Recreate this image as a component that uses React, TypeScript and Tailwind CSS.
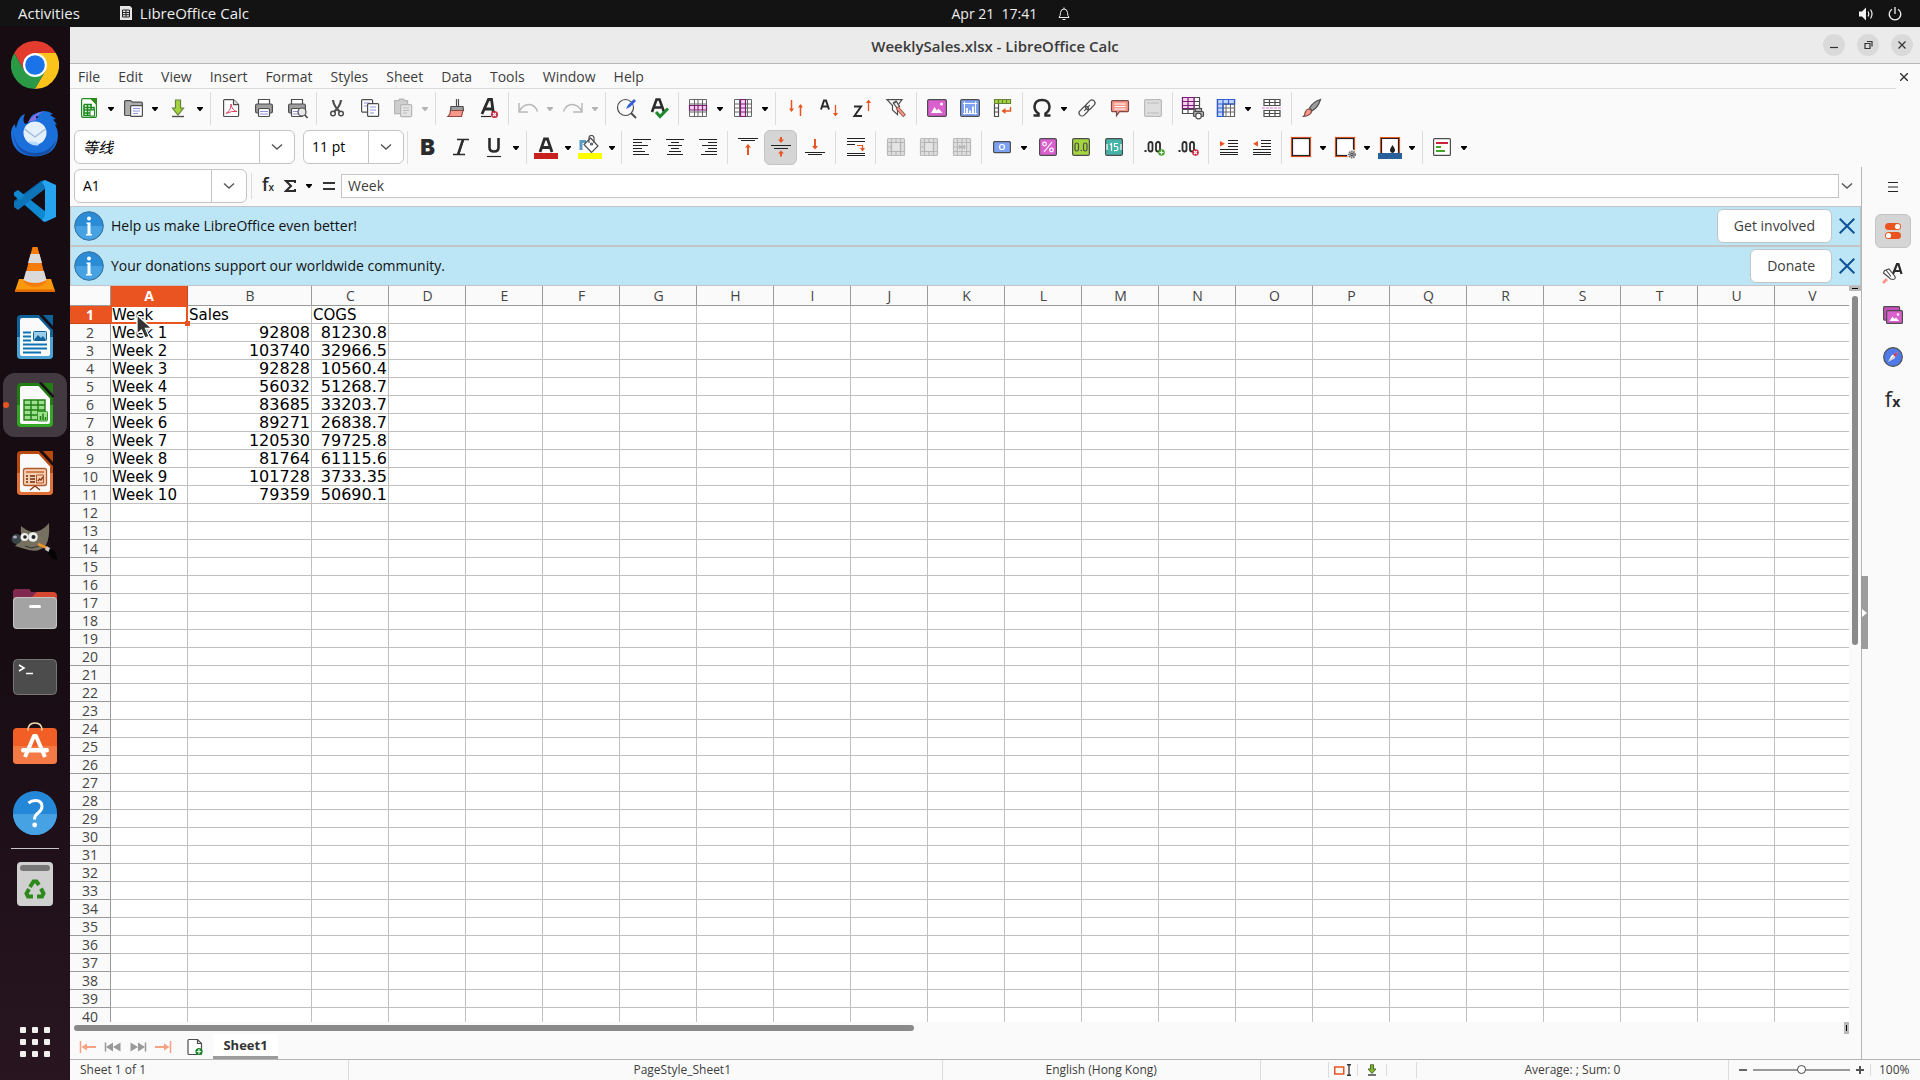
import React from "react";

const columns = "ABCDEFGHIJKLMNOPQRSTUV".split("");

const data: string[][] = [
  ["Week", "Sales", "COGS"],
  ["Week 1", "92808", "81230.8"],
  ["Week 2", "103740", "32966.5"],
  ["Week 3", "92828", "10560.4"],
  ["Week 4", "56032", "51268.7"],
  ["Week 5", "83685", "33203.7"],
  ["Week 6", "89271", "26838.7"],
  ["Week 7", "120530", "79725.8"],
  ["Week 8", "81764", "61115.6"],
  ["Week 9", "101728", "3733.35"],
  ["Week 10", "79359", "50690.1"],
];

const menus = ["File", "Edit", "View", "Insert", "Format", "Styles", "Sheet", "Data", "Tools", "Window", "Help"];

const DARK = "#4d4d4d";
const ORANGE = "#e95420";

type SvgProps = { children: React.ReactNode; className?: string };

const Icon = ({ children, className = "" }: SvgProps) => (
  <svg viewBox="0 0 24 24" className={`w-6 h-6 shrink-0 ${className}`} fill="none" stroke={DARK} strokeWidth="1.2" aria-hidden="true">
    {children}
  </svg>
);

const AppIcon = ({ children }: SvgProps) => (
  <svg viewBox="0 0 48 48" className="w-12 h-12" fill="none" aria-hidden="true">
    {children}
  </svg>
);

const Chevron = () => (
  <svg viewBox="0 0 12 8" className="w-3 h-2" fill="none" stroke="#555" strokeWidth="1.4" aria-hidden="true">
    <path d="M1 1.5 6 6l5-4.5" />
  </svg>
);

const Arrow = ({ muted }: { muted?: boolean }) => (
  <svg viewBox="0 0 6 4" className={muted ? "w-1.5 h-1 text-[#b4b4b4]" : "w-1.5 h-1 text-black"} aria-hidden="true">
    <path d="M0 0h6v1L3.500 4h-1L0 1z" fill="currentColor" />
  </svg>
);

const Tool = ({ label, children, wide }: { label: string; children: React.ReactNode; wide?: boolean }) => (
  <button aria-label={label} className={`${wide ? "w-[35px]" : "w-[33px]"} h-9 flex items-center justify-center shrink-0`}>
    {children}
  </button>
);

// icon with its drop-down arrow; the last one in a group is a little wider
const Drop = ({ label, children, last, muted }: { label: string; children: React.ReactNode; last?: boolean; muted?: boolean }) => (
  <button aria-label={label} className={`${last ? "w-[46px]" : "w-11"} h-9 flex items-center shrink-0`}>
    <span className="w-[33px] flex justify-center">{children}</span>
    <span className="w-3 pt-0.5 flex justify-center">
      <Arrow muted={muted} />
    </span>
  </button>
);

const Sep = () => <span className="mx-[3px] w-px h-[33px] bg-[#dcdcdc] shrink-0" />;

const Printer = () => (
  <>
    <path d="M6.500 8V3.500h11V8" fill="#fff" />
    <rect x="3.600" y="8" width="16.800" height="9" rx="1.500" fill="#9e9e9e" />
    <rect x="6.500" y="12.500" width="11" height="8" rx="1" fill="#fff" />
    <path d="M8 15.500h8M8 18h8" stroke="#8d92e8" />
  </>
);

const GridLines = ({ stroke = "#666" }: { stroke?: string }) => (
  <g stroke={stroke} strokeWidth="1">
    <path d="M3.500 3.500h17v17h-17zM8.500 3.500v17M12 3.500v17M16.500 3.500v17M3.500 8h17M3.500 12h17M3.500 16h17" />
  </g>
);

const MergeIcon = ({ inner }: { inner: string }) => (
  <Icon>
    <rect x="3.500" y="3.500" width="17" height="17" rx="1" fill="#dedede" stroke="#b9b9b9" />
    <path d="M3.500 7.500h17M3.500 16.500h17M7.500 3.500v17M16.500 3.500v17M12 3.500v4M12 16.500v4M3.500 12h4" stroke="#b9b9b9" />
    <rect x="8" y="8" width="8" height="8" fill="#e4e4e4" stroke="none" />
    <path d={inner} stroke="#b4b4b4" />
  </Icon>
);

const BigLetter = ({ children, className = "" }: SvgProps) => (
  <span className={`font-[Inter,Roboto,sans-serif] font-black leading-6 text-[#2b2b2b] ${className}`}>{children}</span>
);

const StandardToolbar = () => (
  <div className="flex items-center h-[38px] pl-[3px]">
    <Drop label="New">
      <Icon>
        <path d="M6 2.600h8.500L19.400 8v12a1.400 1.400 0 0 1-1.400 1.400H6A1.400 1.400 0 0 1 4.600 20V4A1.400 1.400 0 0 1 6 2.600z" fill="#fff" stroke="#1c8a1c" />
        <path d="M12.500 2H20v7.500z" fill="#2c8a1a" stroke="none" />
        <path d="M7 8.500h8M7 11.500h10v8H7zM7 14h10M7 17h10M10.500 8.500v11M14 8.500v11M7 8.500v3" stroke="#1c8a1c" strokeWidth="1.600" />
        <path d="M13 14h4.500v6H13z" fill="#fff" stroke="#1c8a1c" strokeWidth="1" />
      </Icon>
    </Drop>
    <Drop label="Open">
      <Icon>
        <path d="M3.600 18.500V5.600Q3.600 4.600 4.600 4.600h5l2 1.600h8.500q1.300 0 1.300 1.300v11q0 1-1 1H4.600q-1 0-1-1z" fill="#adadad" />
        <rect x="9.600" y="9.600" width="11.800" height="10.800" rx="1" fill="#fff" />
        <path d="M12 12.500h7M12 15h7M12 17.500h5" stroke="#8d92e8" />
      </Icon>
    </Drop>
    <Drop label="Save" last>
      <Icon>
        <path d="M9.500 4h5v8h3L12 19l-5.500-7h3z" fill="#a5d53e" stroke="#66823a" />
        <path d="M6 20.500h12" stroke={DARK} strokeWidth="1.400" />
      </Icon>
    </Drop>
    <Sep />
    <Tool label="Export as PDF">
      <Icon>
        <path d="M5.500 3.600h9L19.600 8.500v11q0 1-1 1h-13q-1 0-1-1v-15q0-1 1-1z" fill="#fff" />
        <path d="M14.500 3.600v5h5" fill="#ddd" />
        <path d="M7 17.500q5-3 5-9.500 1 6.500 6 7.500-5-1-11 2z" stroke="#d94560" strokeWidth="1" />
      </Icon>
    </Tool>
    <Tool label="Print">
      <Icon><Printer /></Icon>
    </Tool>
    <Tool label="Print Preview">
      <Icon>
        <Printer />
        <circle cx="17" cy="16" r="4" fill="#e8e8e8" />
        <path d="m20 19 2.500 3" strokeWidth="1.800" />
      </Icon>
    </Tool>
    <Sep />
    <Tool label="Cut">
      <Icon>
        <path d="M8 4q.500 6 7 12M16 4q-.500 6-7 12" strokeWidth="2.200" />
        <circle cx="8" cy="17.500" r="2.300" strokeWidth="1.500" />
        <circle cx="16" cy="17.500" r="2.300" strokeWidth="1.500" />
      </Icon>
    </Tool>
    <Tool label="Copy">
      <Icon>
        <rect x="3.600" y="3.600" width="11" height="12.500" rx="1" fill="#fff" />
        <path d="M6 7h6M6 10h4" stroke="#8d92e8" />
        <rect x="9.600" y="7.600" width="11" height="12.800" rx="1" fill="#fff" />
        <path d="M12 11h6M12 14h6M12 17h4" stroke="#8d92e8" />
      </Icon>
    </Tool>
    <Drop label="Paste" last muted>
      <Icon>
        <path d="M3.600 4.600h4l1-1.500h4l1 1.500h3v13h-13z" fill="#cfcfcf" stroke="#b5b5b5" />
        <rect x="9.600" y="8.600" width="11" height="12" rx="1" fill="#e4e4e4" stroke="#b5b5b5" />
        <path d="M12 12h6M12 14.500h6M12 17h4" stroke="#bbb" />
      </Icon>
    </Drop>
    <Sep />
    <Tool label="Clone Formatting">
      <Icon>
        <path d="M12.500 3v7M14.500 3v7" />
        <path d="M6.500 14.500 7 10.500h12l.500 4z" fill="#9e9e9e" />
        <path d="M6.500 14.500h12.500l-1.500 6H4q2.500-2.500 2.500-6z" fill="#f7988a" stroke="#8f4a42" />
      </Icon>
    </Tool>
    <Tool label="Clear Direct Formatting">
      <Icon>
        <path d="m5 18 6.500-14.500h3L16.500 18M8 13h7" stroke="#2b2b2b" strokeWidth="2.800" />
        <path d="M4 20.500h10" stroke="#2b2b2b" />
        <circle cx="17.500" cy="18.500" r="3.500" fill="#c9243c" stroke="none" />
        <path d="m16 17 3 3m0-3-3 3" stroke="#fff" />
      </Icon>
    </Tool>
    <Sep />
    <Drop label="Undo" muted>
      <Icon>
        <path d="M3 7v9h9M3.500 15Q7 8.500 13 8.500q6 0 8.500 7" stroke="#b9b9b9" strokeWidth="1.500" />
      </Icon>
    </Drop>
    <Drop label="Redo" last muted>
      <Icon>
        <path d="M21 7v9h-9M20.500 15Q17 8.500 11 8.500q-6 0-8.500 7" stroke="#b9b9b9" strokeWidth="1.500" />
      </Icon>
    </Drop>
    <Sep />
    <Tool label="Find and Replace">
      <Icon>
        <circle cx="11.500" cy="11.500" r="8" />
        <path d="m17 17 5 5" strokeWidth="2" />
        <path d="m12 13 2-4 6-6 2 2-6 6z" fill="#2f5fd8" stroke="none" />
      </Icon>
    </Tool>
    <Tool label="Spelling">
      <Icon>
        <path d="m5 16 4.500-12.500h3L17 16M7 11.500h7" stroke="#2b2b2b" strokeWidth="2.600" />
        <path d="m9 16 4 4.500 8-8" stroke="#1a8a2a" strokeWidth="3" />
      </Icon>
    </Tool>
    <Sep />
    <Drop label="Row">
      <Icon>
        <GridLines />
        <path d="M3.500 9.500h17v4.500h-17zM8.500 9.500V14M12 9.500V14M16.500 9.500V14" fill="#f3d3ef" stroke="#7d1d74" />
      </Icon>
    </Drop>
    <Drop label="Column" last>
      <Icon>
        <GridLines />
        <path d="M9.500 3.500h5v17h-5zM9.500 8h5M9.500 12h5M9.500 16h5" fill="#f3d3ef" stroke="#7d1d74" />
      </Icon>
    </Drop>
    <Sep />
    <Tool label="Sort">
      <Icon>
        <path d="M7.500 4v11M16.500 9v11" stroke={ORANGE} strokeWidth="1.500" />
        <path d="M5 12.500h5l-2.500 3.500zM14 11.500h5L16.500 8z" fill={ORANGE} stroke="none" />
      </Icon>
    </Tool>
    <Tool label="Sort Ascending">
      <Icon>
        <path d="m4 13.500 3-9h2l3 9M5 10.500h6" stroke="#2b2b2b" strokeWidth="2" />
        <path d="M18.500 9v10" stroke={ORANGE} strokeWidth="1.300" />
        <path d="M16 17h5l-2.500 3.500z" fill={ORANGE} stroke="none" />
      </Icon>
    </Tool>
    <Tool label="Sort Descending">
      <Icon>
        <path d="M4 10.500h7L4.500 20H12" stroke="#2b2b2b" strokeWidth="2" />
        <path d="M18.500 5v10" stroke={ORANGE} strokeWidth="1.300" />
        <path d="M16 7h5l-2.500-3.500z" fill={ORANGE} stroke="none" />
      </Icon>
    </Tool>
    <Tool label="AutoFilter" wide>
      <Icon>
        <path d="M3 3.600h15l-4.500 6v9L8.500 14V9.600z" fill="#fff" />
        <path d="m9 7 3-2 3 5" fill="#fff" />
        <path d="m9.500 7.500 3-2 3 5-2 2z" fill="#eee" />
        <path d="m13 11.500 7.500 8.500" stroke="#8f4a42" strokeWidth="3.600" />
        <path d="m13.500 12 6.500 7.500" stroke="#f7988a" strokeWidth="2" />
      </Icon>
    </Tool>
    <Sep />
    <Tool label="Insert Image">
      <Icon>
        <rect x="2.600" y="3.600" width="18.800" height="16.800" rx="1.500" fill="#da5fcf" />
        <path d="m6 17 3.500-6 2.500 3.500 1.500-2 4 4.500z" fill="#fff" stroke="none" />
        <circle cx="16.500" cy="8" r="1.500" fill="#fff" stroke="none" />
      </Icon>
    </Tool>
    <Tool label="Insert Chart">
      <Icon>
        <rect x="2.600" y="3.600" width="18.800" height="16.800" rx="1.500" fill="#7da2f5" />
        <path d="M6.500 5.500v13M5 7.500h14M17.500 5.500v13M5 17.500h14" stroke="#fff" strokeWidth="1" />
        <path d="M9 12v5M12 14.500V17M15 10.500V17" stroke="#fff" strokeWidth="1.800" />
      </Icon>
    </Tool>
    <Tool label="Pivot Table">
      <Icon>
        <path d="M3.500 8v12.500h4V8M3.500 12h4M3.500 16h4" fill="#fff" />
        <path d="M3.500 3.500h16v4h-16zM7.500 3.500v4M11.500 3.500v4M15.500 3.500v4" fill="#a5d53e" stroke="#66823a" />
        <path d="M19.500 11v4h-7" stroke={ORANGE} strokeWidth="1.400" />
        <path d="M14.500 12v6L10.500 15z" fill={ORANGE} stroke="none" />
      </Icon>
    </Tool>
    <Sep />
    <Drop label="Special Character">
      <Icon>
        <path d="M3.500 19.500h5v-2Q4.500 15 4.500 10.500 5 4 12 4q7 0 7.500 6.500 0 4.500-4 7v2h5" stroke="#2b2b2b" strokeWidth="2.500" />
      </Icon>
    </Drop>
    <Tool label="Hyperlink">
      <Icon>
        <g transform="rotate(-45 12 12)">
          <rect x="2" y="9" width="11" height="6" rx="3" />
          <rect x="11" y="9" width="11" height="6" rx="3" />
          <path d="M8 12h8" />
        </g>
      </Icon>
    </Tool>
    <Tool label="Comment">
      <Icon>
        <path d="M4.500 4.600h15q1 0 1 1v9q0 1-1 1h-8l-3 4v-4h-4q-1 0-1-1v-9q0-1 1-1z" fill="#f7988a" stroke="#7e4a45" />
        <path d="M6.500 8h11M6.500 10.500h11M6.500 13h11" stroke="#fff" strokeWidth="1" />
      </Icon>
    </Tool>
    <Tool label="Headers and Footers">
      <Icon>
        <rect x="3.600" y="3.600" width="16.800" height="16.800" rx="1.500" fill="#dedede" stroke="#b9b9b9" />
        <path d="M6 7h12M6 17h12" stroke="#b9b9b9" />
      </Icon>
    </Tool>
    <Sep />
    <Tool label="Define Print Area">
      <Icon>
        <path d="M1.500 1.500h17v16h-17zM1.500 5.500h17M1.500 9.500h17M1.500 13.500h17M7 1.500v16M13 1.500v16" fill="#fff" />
        <path d="M1.500 1.500H13v11H1.500zM1.500 5.500H13M1.500 9.500H13M7 1.500v11" fill="#f3d3ef" stroke="#7d1d74" />
        <rect x="14.500" y="12.500" width="6" height="4" fill="#bbb" />
        <rect x="12.500" y="15.500" width="10" height="5" rx="1" fill="#adadad" />
        <circle cx="17.500" cy="20" r="2.800" fill="#fff" />
      </Icon>
    </Tool>
    <Drop label="Freeze Rows and Columns" last>
      <Icon>
        <path d="M3.500 3.500h17v17h-17z" fill="#fff" />
        <GridLines />
        <path d="M3.500 3.500h17V8H9v12.500H3.500z" fill="#c3d6fb" />
        <path d="M3.500 3.500h17V8h-17zM3.500 8v12.500H9V3.500M3.500 12H9M3.500 16H9M14.500 3.500V8" stroke="#2f5fd8" />
      </Icon>
    </Drop>
    <Tool label="Split Window">
      <Icon>
        <path d="M4 3.500h16v6H4zM4 6.500h16M9.500 3.500v6M15 3.500v6M4 14.500h16v6H4zM4 17.500h16M9.500 14.500v6M15 14.500v6" fill="#fff" />
        <path d="M2 12h20" stroke="#e27bd9" strokeDasharray="3 1" />
      </Icon>
    </Tool>
    <Sep />
    <Tool label="Show Draw Functions">
      <Icon>
        <path d="M20.500 3.500q-7 2-11 8.500l2.500 3q6-3.500 8.500-11.500z" fill="#9e9e9e" />
        <path d="M8.500 13q3 0 3 3-2 4-8 4.500 1.500-1.500 1.500-3.500 1-3.500 3.500-4z" fill="#f7988a" stroke="#7e4a45" />
      </Icon>
    </Tool>
  </div>
);

const Lines = ({ rows }: { rows: [number, number][] }) => (
  <Icon>
    {rows.map(([x1, x2], i) => (
      <path key={i} d={`M${x1} ${4.5 + i * 3}H${x2}`} stroke="#222" strokeWidth="1" />
    ))}
  </Icon>
);

const Combo = ({ label, value, className, inputClass }: { label: string; value: string; className: string; inputClass?: string }) => (
  <div className={`flex h-[34px] border border-[#c4c4c4] rounded-md bg-white overflow-hidden shrink-0 ${className}`}>
    <input aria-label={label} defaultValue={value} className={`flex-1 min-w-0 px-2 text-black outline-none ${inputClass ?? "text-sm"}`} />
    <button aria-label={`${label} list`} className="w-[35px] border-l border-[#c4c4c4] flex items-center justify-center">
      <Chevron />
    </button>
  </div>
);

const FormattingToolbar = () => (
  <div className="flex items-center h-10 pl-1">
    <Combo label="Font Name" value="等线" className="w-[221px]" inputClass="text-[15px] italic font-['Noto_Sans_CJK_SC',sans-serif]" />
    <Combo label="Font Size" value="11 pt" className="w-[101px] ml-2" />
    <Sep />
    <Tool label="Bold"><BigLetter className="text-[22px]">B</BigLetter></Tool>
    <Tool label="Italic">
      <Icon><path d="M8 4.500h12M4 19.500h12M14.500 4.500l-5 15" stroke="#2b2b2b" strokeWidth="1.600" /><path d="m14 4.500-5 15" stroke="#2b2b2b" strokeWidth="2.400" /></Icon>
    </Tool>
    <Drop label="Underline" last>
      <Icon><path d="M7.500 3v9.500q0 4 4.500 4t4.500-4V3" stroke="#2b2b2b" strokeWidth="2.600" /><path d="M5 21.500h14" stroke="#2b2b2b" /></Icon>
    </Drop>
    <Sep />
    <Drop label="Font Color">
      <Icon>
        <path d="m6 17 4.500-13h3L18 17M8 12.500h8" stroke="#2b2b2b" strokeWidth="2.800" />
        <path d="M0 18h24v6H0z" fill="#c9211e" stroke="none" />
      </Icon>
    </Drop>
    <Drop label="Background Color">
      <Icon>
        <path d="M3 15V6.500h5" stroke="#5b9cc4" strokeWidth="3" />
        <path d="m12.500 3 7.500 8-6.500 6.500-7.500-8z" fill="#fff" />
        <path d="M11 8V3q0-2.500 2.500-2.500T16 3v5" />
        <circle cx="13.500" cy="9" r="1" />
        <path d="M0 18h24v6H0z" fill="#ffff00" stroke="none" />
      </Icon>
    </Drop>
    <Sep />
    <Tool label="Align Left"><Lines rows={[[3, 21], [3, 12], [3, 18], [3, 12], [3, 15], [3, 19]]} /></Tool>
    <Tool label="Center Horizontally"><Lines rows={[[3, 21], [8, 16], [5, 19], [8, 16], [6, 18], [4, 20]]} /></Tool>
    <Tool label="Align Right"><Lines rows={[[3, 21], [12, 21], [6, 21], [12, 21], [9, 21], [5, 21]]} /></Tool>
    <Sep />
    <Tool label="Align Top">
      <Icon>
        <path d="M2 3.500h20M5 5.500h14" stroke="#222" strokeWidth="1" />
        <path d="M12 10v10" stroke={ORANGE} strokeWidth="2" />
        <path d="M9 12.500h6L12 9z" fill={ORANGE} stroke="none" />
      </Icon>
    </Tool>
    <button aria-label="Center Vertically" aria-pressed="true" className="w-[33px] h-[35px] flex items-center justify-center rounded-md bg-[#d5d5d5] border border-[#c4c4c4] shrink-0">
      <Icon>
        <path d="M2 10.500h20M5 13.500h14" stroke="#222" strokeWidth="1" />
        <path d="M12 2v4M12 17.500v4" stroke={ORANGE} strokeWidth="2" />
        <path d="M9 4.500h6L12 8zM9 18.500h6L12 15.500z" fill={ORANGE} stroke="none" />
      </Icon>
    </button>
    <Tool label="Align Bottom" wide>
      <Icon>
        <path d="M2 17.500h20M5 19.500h14" stroke="#222" strokeWidth="1" />
        <path d="M12 4v9" stroke={ORANGE} strokeWidth="2" />
        <path d="M9 11h6l-3 3.500z" fill={ORANGE} stroke="none" />
      </Icon>
    </Tool>
    <Sep />
    <Tool label="Wrap Text">
      <Icon>
        <path d="M3 3.500h18M3 6.500h18M3 9.500h8M3 18.500h18M3 20.500h18" stroke="#222" strokeWidth="1" />
        <path d="M13 10.500h5.500v3" stroke={ORANGE} />
        <path d="M16 13h5l-2.500 3.500z" fill={ORANGE} stroke="none" />
      </Icon>
    </Tool>
    <Sep />
    <Tool label="Merge and Center Cells"><MergeIcon inner="M7.500 7.500h9v9h-9z" /></Tool>
    <Tool label="Merge Cells"><MergeIcon inner="M7.500 7.500h9v9h-9z" /></Tool>
    <Tool label="Unmerge Cells"><MergeIcon inner="M7.500 12h3m6 0h-3M12 7.500v9M9 10l2 2-2 2m6-4-2 2 2 2" /></Tool>
    <Sep />
    <Drop label="Format as Currency" last>
      <Icon>
        <rect x="3.600" y="6.600" width="16.800" height="11" rx="1" fill="#7da2f5" />
        <circle cx="12" cy="12" r="2.500" stroke="#fff" />
      </Icon>
    </Drop>
    <Tool label="Format as Percent">
      <Icon>
        <rect x="3.600" y="3.600" width="16.800" height="16.800" rx="1.500" fill="#da5fcf" />
        <path d="m8 17 8-10" stroke="#fff" />
        <circle cx="8.500" cy="9" r="1.800" stroke="#fff" />
        <circle cx="15.500" cy="15" r="1.800" stroke="#fff" />
      </Icon>
    </Tool>
    <Tool label="Format as Number">
      <Icon>
        <rect x="3.600" y="3.600" width="16.800" height="16.800" rx="1.500" fill="#a5d53e" />
        <rect x="6" y="8" width="3.500" height="8" rx="1.700" />
        <rect x="14.500" y="8" width="3.500" height="8" rx="1.700" />
        <path d="M11.500 15.500h1.500" />
      </Icon>
    </Tool>
    <Tool label="Format as Date">
      <Icon>
        <rect x="3.600" y="3.600" width="16.800" height="16.800" rx="1.500" fill="#45b3a8" />
        <path d="M5 9v6M19 9v6M8 9.500l1.500-1V16M16 8.500h-3.500v3q3.500-.500 3.500 2t-4 2" stroke="#fff" />
      </Icon>
    </Tool>
    <Sep />
    <Tool label="Add Decimal Place">
      <Icon>
        <path d="M2.500 16h2" stroke="#2b2b2b" strokeWidth="2" />
        <rect x="6.500" y="7" width="4" height="9.500" rx="2" stroke="#2b2b2b" strokeWidth="1.800" />
        <rect x="14" y="7" width="4" height="9.500" rx="2" stroke="#2b2b2b" strokeWidth="1.800" />
        <circle cx="19.500" cy="17.500" r="3.300" fill="#43a528" stroke="none" />
        <path d="M17.500 17.500h4M19.500 15.500v4" stroke="#fff" />
      </Icon>
    </Tool>
    <Tool label="Delete Decimal Place" wide>
      <Icon>
        <path d="M2.500 16h2" stroke="#2b2b2b" strokeWidth="2" />
        <rect x="6.500" y="7" width="4" height="9.500" rx="2" stroke="#2b2b2b" strokeWidth="1.800" />
        <rect x="14" y="7" width="4" height="9.500" rx="2" stroke="#2b2b2b" strokeWidth="1.800" />
        <circle cx="19.500" cy="17.500" r="3.300" fill="#c9243c" stroke="none" />
        <path d="m18 16 3 3m0-3-3 3" stroke="#fff" />
      </Icon>
    </Tool>
    <Sep />
    <Tool label="Increase Indent">
      <Icon>
        <path d="M11 5.500h10M11 8.500h10M11 11.500h10M3 14.500h18M3 17.500h18M3 19.500h18" stroke="#222" strokeWidth="1" />
        <path d="M3 6v5.500L8 8.700z" fill={ORANGE} stroke="none" />
      </Icon>
    </Tool>
    <Tool label="Decrease Indent">
      <Icon>
        <path d="M11 5.500h10M11 8.500h10M11 11.500h10M3 14.500h18M3 17.500h18M3 19.500h18" stroke="#222" strokeWidth="1" />
        <path d="M8 6v5.500L3 8.700z" fill={ORANGE} stroke="none" />
      </Icon>
    </Tool>
    <Sep />
    <Drop label="Borders">
      <Icon>
        <rect x="2.500" y="2.500" width="19" height="19" stroke={ORANGE} />
        <rect x="3.500" y="3.500" width="17" height="17" fill="#fff" stroke="#222" />
      </Icon>
    </Drop>
    <Drop label="Border Style">
      <Icon>
        <rect x="2.500" y="2.500" width="19" height="19" stroke={ORANGE} />
        <rect x="3.500" y="3.500" width="17" height="17" fill="#fff" stroke="#222" />
        <circle cx="19" cy="19.500" r="5" fill="#fafafa" stroke="none" />
        <circle cx="19" cy="19.500" r="3.200" fill="#bbb" stroke="#777" strokeWidth="1.800" strokeDasharray="1.500 .800" />
        <circle cx="19" cy="19.500" r="1.200" fill="#fff" />
      </Icon>
    </Drop>
    <Drop label="Border Color" last>
      <Icon>
        <path d="M2.500 18V2.500h19V18" stroke={ORANGE} />
        <path d="M3.500 18V3.500h17V18" fill="#fff" stroke="#222" />
        <path d="M14.500 10q3 4 2.500 6-1 2-2.500 2T12 16q-.500-2 2.500-6z" fill="#222" stroke="none" />
        <path d="M0 18h24v6H0z" fill="#2a6099" stroke="none" />
      </Icon>
    </Drop>
    <Sep />
    <Drop label="Conditional Formatting">
      <Icon>
        <rect x="3.600" y="3.600" width="16.800" height="16.800" rx="1" fill="#fff" />
        <path d="M6 8h12" stroke="#c9243c" strokeWidth="2" />
        <path d="M6 12h5M6 16h9" stroke="#43a528" strokeWidth="2" />
      </Icon>
    </Drop>
  </div>
);

const FormulaBar = () => (
  <div className="flex items-center h-[39px] pl-1 pr-1.5 pb-0.5 shrink-0">
    <Combo label="Name Box" value="A1" className="w-[173px]" />
    <span className="mx-1 w-px h-[26px] bg-[#dcdcdc]" />
    <button aria-label="Function Wizard" className="w-6 text-center leading-6 text-[#2b2b2b] text-lg font-semibold">
      f<span className="text-[10px]">x</span>
    </button>
    <button aria-label="Select Function" className="w-[37px] pl-1 flex items-center gap-2.5">
      <svg viewBox="0 0 12 14" className="w-3 h-3.5 shrink-0" fill="none" stroke="#2b2b2b" strokeWidth="2" aria-hidden="true">
        <path d="M11 4V2H2l5 5-5 5h9v-2" />
      </svg>
      <Arrow />
    </button>
    <button aria-label="Formula" className="w-6 flex flex-col items-center gap-1">
      <span className="w-3 h-0.5 bg-[#333]" />
      <span className="w-3 h-0.5 bg-[#333]" />
    </button>
    <input aria-label="Input line" defaultValue="Week" className="flex-1 min-w-0 h-6 border border-[#c4c4c4] bg-white px-1.5 text-sm text-[#3d3d3d] outline-none" />
    <button aria-label="Expand Formula Bar" className="w-4 flex justify-center">
      <Chevron />
    </button>
  </div>
);

const InfoBar = ({ text, action }: { text: string; action: string }) => (
  <div className="flex items-center h-10 border border-[#c4c4c4] bg-[#bce5f6] pl-[3px] pr-[5px] shrink-0">
    <svg viewBox="0 0 30 30" className="w-[30px] h-[30px]" aria-hidden="true">
      <circle cx="15" cy="15" r="14.300" fill="#2a8bd6" stroke="#3a6d96" strokeWidth="1" />
      <path d="M1.500 15a13.500 13.500 0 0 0 27 0z" fill="#46a2e2" />
      <circle cx="15" cy="7.500" r="2" fill="#fff" />
      <path d="M12.500 11.500h4V23h1.500v1.500h-6V23h1.500V13h-1z" fill="#fff" />
    </svg>
    <p className="flex-1 ml-[7px] text-sm text-[#111]">{text}</p>
    <button className="h-[34px] px-4 border border-[#c4c4c4] rounded-md bg-white text-sm text-[#3d3d3d]">{action}</button>
    <button aria-label="Close Infobar" className="ml-[7px] w-4">
      <svg viewBox="0 0 16 16" className="w-4 h-4" stroke="#0b5394" strokeWidth="2" aria-hidden="true">
        <path d="m.700.700 14.600 14.600m0-14.600L.700 15.300" />
      </svg>
    </button>
  </div>
);

const Sheet = () => (
  <div className="relative flex-1 min-w-0 overflow-hidden bg-white">
    <table className="w-full table-fixed border-separate border-spacing-0">
      <colgroup>
        <col className="w-[41px]" />
        {columns.map((c) => (
          <col key={c} className={c === "B" ? "w-[124px]" : c === "V" ? "" : "w-[77px]"} />
        ))}
      </colgroup>
      <thead>
        <tr className="h-5 text-sm leading-[18px] text-[#444]">
          <td className="p-0 bg-[#fafafa] border-r border-b border-[#9a9a9a]" />
          {columns.map((c) => (
            <th
              key={c}
              scope="col"
              className={
                c === "A"
                  ? "p-0 border-r border-b border-[#c8481c] bg-[#e95420] text-white font-bold"
                  : "p-0 pl-px border-r border-b border-[#9a9a9a] bg-[#fafafa] font-normal last:border-r-0"
              }
            >
              {c}
            </th>
          ))}
        </tr>
      </thead>
      <tbody>
        {Array.from({ length: 40 }, (_, r) => (
          <tr key={r} className="h-[18px] leading-[17px]">
            <th
              scope="row"
              className={
                r === 0
                  ? "p-0 border-r border-b border-[#c8481c] bg-[#e95420] text-white text-sm leading-[17px] font-bold"
                  : "p-0 border-r border-b border-[#9a9a9a] bg-[#fafafa] text-[#444] text-sm leading-[17px] font-normal"
              }
            >
              {r + 1}
            </th>
            {columns.map((c, i) => {
              const value = data[r]?.[i];
              const numeric = r > 0 && i > 0;
              return (
                <td
                  key={c}
                  className={`relative p-0 px-px border-r border-b border-[#c0c0c0] last:border-r-0 text-black whitespace-nowrap font-['DejaVu_Sans',sans-serif] ${
                    numeric ? "text-right text-base leading-[17px]" : "pt-px text-[15px] leading-4"
                  }`}
                >
                  {value}
                  {r === 0 && i === 0 && (
                    <>
                      <span className="absolute -inset-px border-2 border-[#e95420]" />
                      <span className="absolute -right-[3px] -bottom-[3px] z-10 w-[5px] h-[5px] bg-[#e95420]" />
                    </>
                  )}
                </td>
              );
            })}
          </tr>
        ))}
      </tbody>
    </table>
    <svg viewBox="0 0 18 26" className="absolute left-[66px] top-[28px] w-[18px] h-[26px]" aria-hidden="true">
      <path d="M1 1v19l4.500-4 3.500 8 4-1.700-3.500-7.800H16z" fill="#333" stroke="#fff" strokeWidth="1.300" />
    </svg>
  </div>
);

const Sidebar = () => (
  <aside className="relative w-[59px] pl-[3px] border-l border-[#b5b5b5] flex flex-col items-center shrink-0">
    <button aria-label="Sidebar Settings" className="h-[39px] mb-2 flex items-center">
      <svg viewBox="0 0 10 10" className="w-2.5 h-2.5" stroke="#222" strokeWidth="1" aria-hidden="true">
        <path d="M0 .500h10M0 5h10M0 9.500h10" />
      </svg>
    </button>
    <div className="flex flex-col gap-2">
      <button aria-label="Properties" className="w-9 h-[34px] flex items-center justify-center rounded-md bg-[#d5d5d5] border border-[#c4c4c4]">
        <Icon>
          <rect x="4" y="4" width="16" height="7" rx="3.500" fill={ORANGE} stroke="none" />
          <circle cx="16.500" cy="7.500" r="2.600" fill="#fff" stroke="none" />
          <rect x="4" y="13" width="16" height="7" rx="3.500" fill={ORANGE} stroke="none" />
          <circle cx="7.500" cy="16.500" r="2.600" fill="#fff" stroke="none" />
        </Icon>
      </button>
      <button aria-label="Styles" className="w-9 h-[34px] flex items-center justify-center">
        <Icon>
          <path d="m12 13 4-10h1.500L20.500 13M14 10h5.500" stroke="#2b2b2b" strokeWidth="2.200" />
          <path d="M3.500 9.500 8 8l6 7.500q1 2.500-2 3-3 0-4-2L2.500 12z" fill="#fff" />
          <path d="m5 9 5 6.500" />
          <path d="m2 22 4-4" stroke="#f7988a" strokeWidth="2.800" />
        </Icon>
      </button>
      <button aria-label="Gallery" className="w-9 h-[34px] flex items-center justify-center">
        <Icon>
          <rect x="2.600" y="3.600" width="16" height="13.500" rx="1" fill="#c94fbe" />
          <rect x="5.600" y="7.600" width="15.800" height="12.800" rx="1" fill="#da5fcf" />
          <path d="m8.500 18 3-4.500 2 2.500 1.500-1.500 3 3.500z" fill="#fff" stroke="none" />
          <circle cx="17" cy="11.500" r="1.200" fill="#fff" stroke="none" />
        </Icon>
      </button>
      <button aria-label="Navigator" className="w-9 h-[34px] flex items-center justify-center">
        <Icon>
          <circle cx="12" cy="12" r="9.300" fill="#4f7be8" />
          <path d="m7 17 3.500-6.500L17 7z" fill="#fff" stroke="none" />
          <path d="m7 17 6.500-3.500L17 7z" fill="#ddd" stroke="none" />
          <path d="m12 9.500 5-2.500-2.500 5z" fill="#d9344a" stroke="none" />
        </Icon>
      </button>
      <button aria-label="Functions" className="w-9 h-[34px] text-[22px] leading-6 text-[#2b2b2b]">
        f<span className="text-sm font-bold">x</span>
      </button>
    </div>
    <button aria-label="Hide Sidebar" className="absolute -left-px top-[409px] w-[7px] h-[73px] bg-[#9c9c9c] flex items-center">
      <svg viewBox="0 0 5 8" className="ml-px w-[5px] h-2" aria-hidden="true">
        <path d="m0 0 5 4-5 4z" fill="#fff" />
      </svg>
    </button>
  </aside>
);

const SheetTabs = () => (
  <div className="flex items-center h-[25px] pl-1.5 shrink-0">
    <div className="flex gap-px">
      <button aria-label="First Sheet">
        <Icon><path d="M4.500 6v12" stroke="#f5a184" strokeWidth="1.500" /><path d="M8 12h12" stroke="#f5a184" strokeWidth="2" /><path d="M11 8.500v7L5.500 12z" fill="#f5a184" stroke="none" /></Icon>
      </button>
      <button aria-label="Previous Sheet">
        <Icon><path d="M4.500 7.500v9" stroke="#999" strokeWidth="1.500" /><path d="M12 7.500v9L5 12zM19.500 7.500v9l-7.500-4.500z" fill="#999" stroke="none" /></Icon>
      </button>
      <button aria-label="Next Sheet">
        <Icon><path d="M19.500 7.500v9" stroke="#999" strokeWidth="1.500" /><path d="M4.500 7.500v9L12 12zM12 7.500v9l7-4.500z" fill="#999" stroke="none" /></Icon>
      </button>
      <button aria-label="Last Sheet">
        <Icon><path d="M19.500 6v12" stroke="#f5a184" strokeWidth="1.500" /><path d="M4 12h12" stroke="#f5a184" strokeWidth="2" /><path d="M13 8.500v7l5.500-3.500z" fill="#f5a184" stroke="none" /></Icon>
      </button>
    </div>
    <button aria-label="Add Sheet" className="ml-2">
      <Icon>
        <path d="M6 4.500h8.500l4 4V18.500q0 1-1 1H6q-1 0-1-1v-13q0-1 1-1z" fill="#fff" />
        <path d="M14.500 4.500v4h4" />
        <circle cx="16" cy="16.500" r="3.600" fill="#1a8a2a" stroke="none" />
        <path d="M13.800 16.500h4.400M16 14.300v4.400" stroke="#fff" />
      </Icon>
    </button>
    <button className="ml-1.5 h-[25px] w-[65px] bg-white border-b-[3px] border-[#9c9c9c] text-[13px] leading-[22px] font-bold text-[#333]">Sheet1</button>
  </div>
);

const StatusBar = () => (
  <footer className="flex items-center h-[21px] border-t border-[#b5b5b5] text-xs leading-5 text-[#3d3d3d] divide-x divide-[#dcdcdc] shrink-0 whitespace-nowrap">
    <span className="w-[279px] pl-2.5">Sheet 1 of 1</span>
    <span className="flex-[594]">
      <span className="block ml-[48%]">PageStyle_Sheet1</span>
    </span>
    <span className="flex-[318] text-center">English (Hong Kong)</span>
    <span className="w-[68px] h-4" />
    <span className="w-[29px] flex justify-center">
      <svg viewBox="0 0 18 12" className="w-[18px] h-3" fill="none" aria-hidden="true">
        <path d="M.750 3h9v7h-9z" stroke={ORANGE} strokeWidth="1.500" />
        <path d="M15 1v10M13 .750h4M13 11.250h4" stroke="#333" strokeWidth="1.300" />
      </svg>
    </span>
    <span className="w-[29px] flex justify-center">
      <svg viewBox="0 0 12 12" className="w-3 h-3" fill="none" aria-hidden="true">
        <path d="M4.500.750h3V5h2.500L6 9.500 2 5h2.500z" fill="#7fb82c" stroke="#4d6a2a" strokeWidth="1" />
        <path d="M2 11h8" stroke="#444" strokeWidth="1.500" />
      </svg>
    </span>
    <span className="w-[30px] h-4" />
    <span className="flex-[312] text-center">Average: ; Sum: 0</span>
    <span className="w-[142px] pl-1 flex items-center justify-center gap-1.5">
      <button aria-label="Zoom Out" className="w-2 h-0.5 bg-[#666]" />
      <input
        type="range"
        aria-label="Zoom"
        defaultValue={50}
        className="w-[97px] h-3 appearance-none bg-transparent [&::-webkit-slider-runnable-track]:h-0.5 [&::-webkit-slider-runnable-track]:bg-[#999] [&::-webkit-slider-thumb]:appearance-none [&::-webkit-slider-thumb]:w-[9px] [&::-webkit-slider-thumb]:h-[9px] [&::-webkit-slider-thumb]:-mt-1 [&::-webkit-slider-thumb]:rounded-full [&::-webkit-slider-thumb]:bg-white [&::-webkit-slider-thumb]:border [&::-webkit-slider-thumb]:border-[#444]"
      />
      <button aria-label="Zoom In">
        <svg viewBox="0 0 8 8" className="w-2 h-2" stroke="#555" strokeWidth="2" aria-hidden="true">
          <path d="M0 4h8M4 0v8" />
        </svg>
      </button>
    </span>
    <span className="w-[49px] pl-2">100%</span>
  </footer>
);

const DocShape = ({ dark, light, children }: { dark: string; light: string; children: React.ReactNode }) => (
  <AppIcon>
    <path d="M10 2h21l11 12v28a4 4 0 0 1-4 4H10a4 4 0 0 1-4-4V6a4 4 0 0 1 4-4z" fill={dark} />
    <path d="M6 24h36v18a4 4 0 0 1-4 4H10a4 4 0 0 1-4-4z" fill={light} />
    <path d="M11 5h16.500L39 17.500V41a2 2 0 0 1-2 2H11a2 2 0 0 1-2-2V7a2 2 0 0 1 2-2z" fill="#fafafa" />
    <path d="M29 1.500 42.500 16" stroke="#180c13" strokeWidth="2.500" />
    <path d="M32 2h10v11z" fill={dark} />
    {children}
  </AppIcon>
);

const dockItems: { name: string; icon: React.ReactNode; active?: boolean }[] = [
  {
    name: "Google Chrome",
    icon: (
      <AppIcon>
        <path d="M24 12h20.800A24 24 0 0 0 3.200 12L13.600 30z" fill="#e33b2e" />
        <path d="M3.200 12A24 24 0 0 0 24 48l10.400-18H13.600z" fill="#2b9a47" />
        <path d="M44.800 12A24 24 0 0 1 24 48l10.400-18L24 12z" fill="#fcc31a" />
        <circle cx="24" cy="24" r="12" fill="#fff" />
        <circle cx="24" cy="24" r="9.800" fill="#1a73e8" />
      </AppIcon>
    ),
  },
  {
    name: "Thunderbird",
    icon: (
      <AppIcon>
        <path d="M0 25q0-7 4-10 0 3 1 4Q8 6 14 5q-3 6 0 10l3-1Q20 3 33 2q5 0 9 3l-3 1 6 4-3 .500 4 5h-2q3 5 3 11-1 20-23 21Q1 47 0 25z" fill="#1b6fdb" />
        <path d="M2 21q2 22 22 23 14 0 21-13-4 16-21 16Q3 46 2 21z" fill="#1450a8" />
        <path d="M17 13q6-9 16-11-8 4-8 9z" fill="#8b6fe0" />
        <circle cx="24" cy="24" r="11.500" fill="#e4f0fc" />
        <path d="m13.500 20 10.500 8 10.500-8" stroke="#9db8d6" strokeWidth="1.300" />
        <path d="M16 32q6 6 12 4l-2-3z" fill="#b9dafa" />
        <circle cx="26" cy="8" r="1.200" fill="#0b2f66" />
      </AppIcon>
    ),
  },
  {
    name: "Visual Studio Code",
    icon: (
      <AppIcon>
        <path d="M33 3 10 26l-4 4-3-3v-3L30 4z" fill="#0a68ad" />
        <path d="M3 15.500 7 13l28 22-2 10L3 18.500z" fill="#1089d3" />
        <path d="m3 30 4 3L35 11 33 3 3 27z" fill="#0d74ba" />
        <path d="M34 3l11 5v32l-11 5-3-2 3-4V10l-3-5z" fill="#27a4f0" />
      </AppIcon>
    ),
  },
  {
    name: "VLC media player",
    icon: (
      <AppIcon>
        <path d="M8 34h32l4 12H4z" fill="#f99a0e" />
        <path d="M4 44.500h40V47H4z" fill="#e06a00" />
        <path d="M21.500 2h5l9 35q-5 5-11.500 5T12.500 37z" fill="#f57c0a" />
        <path d="M19.500 9h9l2.500 9H17zM15 26h18l2.500 9q-5 3-11.500 3t-11.500-3z" fill="#dadada" />
      </AppIcon>
    ),
  },
  {
    name: "LibreOffice Writer",
    icon: (
      <DocShape dark="#0f6399" light="#4ba3d4">
        <path d="M12 19.500h8M12 23.500h8M12 27.500h8M12 31.500h24M12 35.500h24M12 39.500h18" stroke="#0b74b5" strokeWidth="2" />
        <rect x="22.500" y="18.500" width="13" height="9" rx="1" fill="#9bcdea" stroke="#0f6399" />
        <path d="m23 27 4-5 3 3 2-2 3 4z" fill="#0f6399" />
      </DocShape>
    ),
  },
  {
    name: "LibreOffice Calc",
    active: true,
    icon: (
      <DocShape dark="#1f7d14" light="#32a625">
        <rect x="13" y="19" width="21" height="20" rx="1" fill="#9fe08f" />
        <path d="M13 19h21v20H13zM13 24h21M13 29h21M13 34h21M20 19v20M27 19v20" stroke="#1f7d14" strokeWidth="1.400" />
        <rect x="26.500" y="30.500" width="10" height="9.500" rx="1" fill="#9fe08f" stroke="#2f9a20" />
        <path d="M29.500 39v-4M32 39v-6.500M34.500 39v-3" stroke="#1f7d14" strokeWidth="1.500" />
      </DocShape>
    ),
  },
  {
    name: "LibreOffice Impress",
    icon: (
      <DocShape dark="#b8490e" light="#e07237">
        <rect x="12.500" y="19.500" width="23" height="17" rx="2" fill="#f6cfb4" stroke="#b35a2b" strokeWidth="1.300" />
        <path d="M15 23h18" stroke="#c9652f" strokeWidth="1.500" />
        <path d="M15 27h2M15 30h2M15 33h2M19 27h5M19 30h5M19 33h5" stroke="#6b2d0c" strokeWidth="1.500" />
        <path d="M25.500 26h7v8h-7z" stroke="#b35a2b" />
        <path d="m27 32 1.500-2 1.500 1 2-3M24 37l-5 4M24 37l5 4" stroke="#8a3c12" strokeWidth="1.400" />
      </DocShape>
    ),
  },
  {
    name: "GIMP",
    icon: (
      <AppIcon>
        <path d="M10 9q6 5 11 6 10 0 17-9 1 15-3 22-7 9-21 4L4 29q5-4 7-9-2-6-1-11z" fill="#75705f" />
        <ellipse cx="5.500" cy="22" rx="5" ry="5" fill="#3a4448" />
        <ellipse cx="4" cy="20" rx="2" ry="1.500" fill="#aab" />
        <circle cx="13.500" cy="20" r="4" fill="#eee" />
        <circle cx="22" cy="20" r="4.800" fill="#eee" />
        <circle cx="14" cy="20" r="1.800" fill="#222" />
        <circle cx="22.500" cy="20" r="2" fill="#222" />
        <path d="m14 29 6 2 8-2" stroke="#333" />
        <path d="m27 27 9 4" stroke="#e8942a" strokeWidth="3" />
        <path d="m35 31 5 3" stroke="#ccc" strokeWidth="4" />
        <path d="M39 31q7 2 7 12-7-1-9-7z" fill="#050505" />
      </AppIcon>
    ),
  },
  {
    name: "Files",
    icon: (
      <AppIcon>
        <path d="M2 12V8q0-4 4-4h11q2 0 3 3h22q4 0 4 4v4H2z" fill="#d6482f" />
        <path d="M2 14V8q0-4 4-4h11q2 0 3 3h6l-8 8z" fill="#80294f" />
        <rect x="2" y="12" width="44" height="32" rx="4" fill="#a3a3a3" />
        <rect x="2.500" y="12.500" width="43" height="31" rx="3.500" stroke="#c4c4c4" />
        <rect x="18" y="20" width="12" height="3" rx="1.500" fill="#fff" />
      </AppIcon>
    ),
  },
  {
    name: "Terminal",
    icon: (
      <AppIcon>
        <rect x="2.500" y="6.500" width="43" height="35" rx="4" fill="#4c4c4c" stroke="#777" />
        <path d="m8 12 5 3-5 3M15 20.500h7" stroke="#fff" strokeWidth="1.600" />
      </AppIcon>
    ),
  },
  {
    name: "Ubuntu Software",
    icon: (
      <AppIcon>
        <rect x="2" y="7" width="44" height="36" rx="4" fill="#f15f26" />
        <path d="M2 25h44v14q0 4-4 4H6q-4 0-4-4z" fill="#f47a45" />
        <path d="M17 9.500Q17 2 24 2t7 7.500" stroke="#f2dcae" strokeWidth="1.500" />
        <path d="m14 36 9-21h2l9 21" stroke="#fff" strokeWidth="4" strokeLinejoin="round" />
        <rect x="10" y="27" width="28" height="4.500" rx="2.200" fill="#fff" />
      </AppIcon>
    ),
  },
  {
    name: "Help",
    icon: (
      <AppIcon>
        <circle cx="24" cy="24" r="22" fill="#2587d8" />
        <path d="M2 25a22 21 0 0 0 44 0z" fill="#46a2e2" />
        <path d="M17.500 14q3-2.500 7-2.500 6.500 0 6.500 6 0 3.500-4 6.500-3.500 2.500-3.500 6.500" stroke="#fff" strokeWidth="3" />
        <circle cx="23.700" cy="36" r="2.400" fill="#fff" />
      </AppIcon>
    ),
  },
];

const Dock = () => (
  <nav className="w-[70px] shrink-0 flex flex-col items-center pt-1.5 bg-gradient-to-b from-[#180c13] from-60% to-[#281520]">
    <div className="flex flex-col gap-1">
      {dockItems.map((item) => (
        <button
          key={item.name}
          aria-label={item.name}
          className={`relative w-16 h-16 flex items-center justify-center rounded-xl ${item.active ? "bg-[#433a41]" : ""}`}
        >
          {item.active && <span className="absolute left-0 w-1.5 h-1.5 rounded-full bg-[#e95420]" />}
          {item.icon}
        </button>
      ))}
    </div>
    <span className="w-12 h-px my-[3px] bg-[#c9c5c8]" />
    <button aria-label="Trash" className="w-16 h-16 flex items-center justify-center">
      <AppIcon>
        <rect x="6" y="2" width="36" height="44" rx="4" fill="#d0d0d0" />
        <rect x="9" y="5" width="30" height="6" rx="3" fill="#777" />
        <g stroke="#2c8a1a" strokeWidth="4">
          <path d="m19 27 3.500-5.500h3L28 25" />
          <path d="m30 28.500 2.500 5-1.500 3h-5" />
          <path d="M22 36.500h-5l-1.500-3 2.500-4.500" />
        </g>
      </AppIcon>
    </button>
    <button aria-label="Show Applications" className="mt-auto mb-[23px] grid grid-cols-3 gap-1.5">
      {Array.from({ length: 9 }, (_, i) => (
        <span key={i} className="w-1.5 h-1.5 rounded-[1px] bg-[#f2f0ee]" />
      ))}
    </button>
  </nav>
);

const TopBar = () => (
  <header className="flex items-center h-[27px] shrink-0 bg-[#131313] text-sm text-[#ededed] whitespace-nowrap">
    <div className="grow basis-[120px] min-w-0 flex items-center pl-[18px] text-[15px]">
      <button>Activities</button>
      <svg viewBox="0 0 12 14" className="ml-10 mr-2 w-3 h-3.5" aria-hidden="true">
        <path d="M0 0h10l2 2v12H0z" fill="#e6e6e6" />
        <path d="M2.500 4h7v7h-7zM2.500 6.500h7M2.500 8.700h7M6 4v7" fill="none" stroke="#222" />
      </svg>
      <button>LibreOffice Calc</button>
    </div>
    <div className="w-[119px] flex items-center justify-between">
      <time className="whitespace-pre">Apr 21  17:41</time>
      <svg viewBox="0 0 14 14" className="w-3.5 h-3.5" fill="none" stroke="#ededed" aria-hidden="true">
        <path d="M2 10.500q1.500-1.500 1.500-5Q4 2 7 2t3.500 3.500q0 3.500 1.500 5zM5.500 12.500h3M7 .500V2" />
      </svg>
    </div>
    <div className="grow basis-0 flex items-center justify-end gap-3.5 pr-[18px]">
      <svg viewBox="0 0 15 14" className="w-[15px] h-3.5" fill="none" stroke="#f2f2f2" aria-hidden="true">
        <path d="M0 4.500h3L7 .500v13L3 9.500H0z" fill="#f2f2f2" stroke="none" />
        <path d="M9 4.500q1.500 2.500 0 5M11.500 2.500q3 4.500 0 9" strokeWidth="1.200" />
      </svg>
      <svg viewBox="0 0 14 14" className="w-3.5 h-3.5" fill="none" stroke="#f2f2f2" strokeWidth="1.300" aria-hidden="true">
        <path d="M7 0v7M4 2.200a5.800 5.800 0 1 0 6 0" />
      </svg>
    </div>
  </header>
);

const TitleBar = () => (
  <div className="relative flex items-center justify-center h-[37px] shrink-0 bg-[#ebebeb] border-b border-[#b9b9b9]">
    <h1 className="pt-0.5 text-[15px] font-semibold text-[#3a3a3a]">WeeklySales.xlsx - LibreOffice Calc</h1>
    <div className="absolute right-[7px] flex gap-3">
      {[
        ["Minimize", "M7 13.500h8"],
        ["Restore", "M8 9.500h5v5H8zM10 7.500h5v5"],
        ["Close", "m7.500 7.500 7 7m0-7-7 7"],
      ].map(([name, d]) => (
        <button key={name} aria-label={name} className="w-[22px] h-[22px] rounded-full bg-[#dadada]">
          <svg viewBox="0 0 22 22" className="w-[22px] h-[22px]" fill="none" stroke="#333" strokeWidth="1.200" aria-hidden="true">
            <path d={d} />
          </svg>
        </button>
      ))}
    </div>
  </div>
);

export default function App() {
  return (
    <div className="h-screen flex flex-col overflow-hidden font-['Open_Sans','Noto_Sans',sans-serif]">
      <TopBar />
      <div className="flex flex-1 min-h-0">
        <Dock />
        <main className="flex-1 min-w-0 flex flex-col bg-[#fafafa]">
          <TitleBar />
          <div className="flex h-[25px] shrink-0 items-stretch">
            <nav className="flex-1 flex items-center gap-[18px] pt-0.5 pl-2 border-b border-[#dcdcdc] text-sm text-[#3d3d3d]">
              {menus.map((m) => (
                <button key={m}>{m}</button>
              ))}
            </nav>
            <button aria-label="Close Document" className="w-6 flex items-center pl-1">
              <svg viewBox="0 0 8 8" className="w-2 h-2" stroke="#333" strokeWidth="1.400" aria-hidden="true">
                <path d="m0 0 8 8m0-8L0 8" />
              </svg>
            </button>
          </div>
          <StandardToolbar />
          <FormattingToolbar />
          <div className="flex flex-1 min-h-0">
            <section className="flex-1 min-w-0 flex flex-col">
              <FormulaBar />
              <InfoBar text="Help us make LibreOffice even better!" action="Get involved" />
              <InfoBar text="Your donations support our worldwide community." action="Donate" />
              <div className="flex flex-1 min-h-0">
                <Sheet />
                <div className="w-3 flex flex-col items-center">
                  <span className="w-full h-[5px] mb-[5px] bg-[#b9b9b9] flex items-center justify-center">
                    <span className="w-1.5 h-px bg-black" />
                  </span>
                  <span className="w-1.5 h-[349px] rounded-sm bg-[#8a8a8a]" />
                </div>
              </div>
              <div className="h-3 flex items-center justify-between pl-1 pr-3 shrink-0">
                <span className="w-[47.3%] h-1.5 rounded-sm bg-[#8a8a8a]" />
                <span className="w-[5px] h-3 bg-[#b9b9b9] flex items-center justify-center">
                  <span className="w-px h-1.5 bg-black" />
                </span>
              </div>
              <SheetTabs />
            </section>
            <Sidebar />
          </div>
          <StatusBar />
        </main>
      </div>
    </div>
  );
}
